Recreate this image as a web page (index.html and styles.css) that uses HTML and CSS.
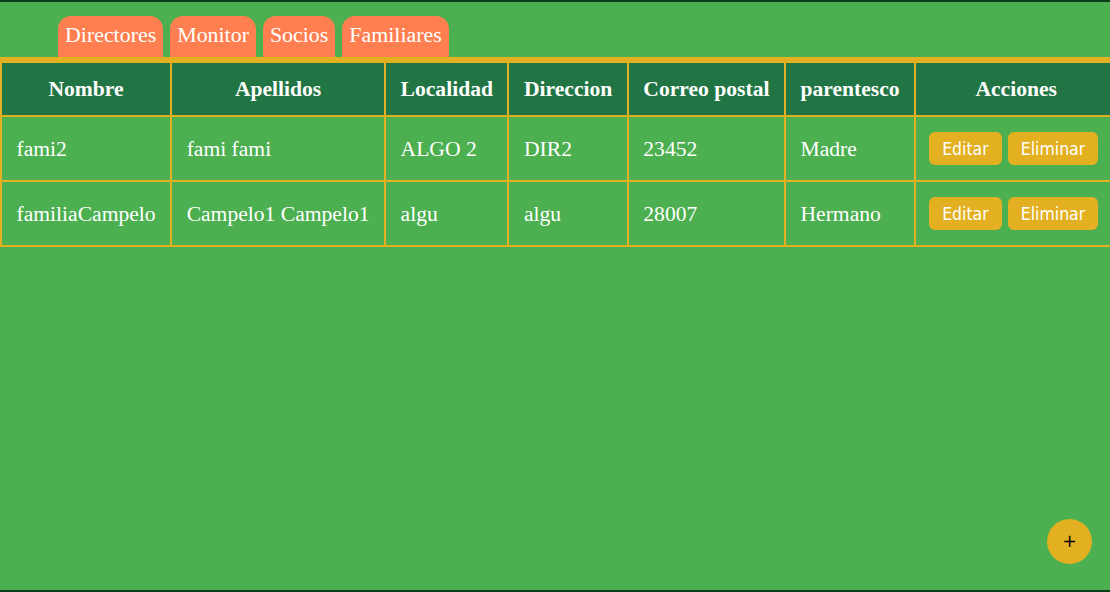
FILE: index.html
```html
<!DOCTYPE html>
<html lang="es">
<head>
<meta charset="utf-8">
<title>Familiares</title>
<link rel="stylesheet" href="styles.css">
</head>
<body>
<div class="page">
  <nav class="tabs">
    <a class="tab" href="#">Directores</a>
    <a class="tab" href="#">Monitor</a>
    <a class="tab" href="#">Socios</a>
    <a class="tab" href="#">Familiares</a>
  </nav>
  <table class="grid">
    <thead>
      <tr>
        <th>Nombre</th>
        <th>Apellidos</th>
        <th>Localidad</th>
        <th>Direccion</th>
        <th>Correo postal</th>
        <th>parentesco</th>
        <th>Acciones</th>
      </tr>
    </thead>
    <tbody>
      <tr>
        <td>fami2</td>
        <td>fami fami</td>
        <td>ALGO 2</td>
        <td>DIR2</td>
        <td>23452</td>
        <td>Madre</td>
        <td class="actions"><button class="btn">Editar</button><button class="btn">Eliminar</button></td>
      </tr>
      <tr>
        <td>familiaCampelo</td>
        <td>Campelo1 Campelo1</td>
        <td>algu</td>
        <td>algu</td>
        <td>28007</td>
        <td>Hermano</td>
        <td class="actions"><button class="btn">Editar</button><button class="btn">Eliminar</button></td>
      </tr>
    </tbody>
  </table>
  <button class="fab">+</button>
</div>
</body>
</html>
```
FILE: styles.css
```css
html, body {
  margin: 0;
  padding: 0;
}
body {
  background: #4caf50;
  font-family: "Liberation Serif", "Times New Roman", serif;
  overflow: hidden;
}
.page {
  box-sizing: border-box;
  height: 100vh;
  border-top: 2px solid #0b3f1a;
  border-bottom: 2px solid #0b3f1a;
  overflow: hidden;
  background: #4caf50;
}
.tabs {
  display: flex;
  gap: 7px;
  padding: 14px 0 0 58px;
  border-bottom: 4px solid #e2b021;
}
.tab {
  display: block;
  background: #ff7f50;
  color: #fff;
  text-decoration: none;
  font-size: 21.9px;
  line-height: 25px;
  padding: 6px 7px 10px;
  border-radius: 13px 13px 0 0;
}
.grid {
  border-collapse: collapse;
  color: #fff;
  font-size: 21.6px;
  white-space: nowrap;
}
.grid th, .grid td {
  border: 2px solid #e2b021;
}
.grid th {
  background: #217544;
  font-weight: bold;
  padding: 14px 14.5px;
  line-height: 24px;
  text-align: center;
}
.grid td {
  padding: 15px 14.5px;
  line-height: 24px;
  text-align: left;
  vertical-align: middle;
}
.grid td.actions {
  padding: 15px 12px 15px 13px;
  font-size: 0;
}
.btn {
  display: inline-block;
  height: 33px;
  padding: 0 13px;
  margin-right: 6px;
  border: none;
  border-radius: 6px;
  background: #e2b021;
  color: #fff;
  font-family: "DejaVu Sans", sans-serif;
  font-stretch: condensed;
  font-size: 17.5px;
  vertical-align: middle;
  cursor: pointer;
}
.fab {
  position: fixed;
  right: 18px;
  bottom: 28px;
  width: 45px;
  height: 45px;
  border: none;
  border-radius: 50%;
  background: #e2b021;
  color: #000;
  font-family: "DejaVu Sans", sans-serif;
  font-size: 17px;
  line-height: 45px;
  padding: 0;
  text-align: center;
}
```
